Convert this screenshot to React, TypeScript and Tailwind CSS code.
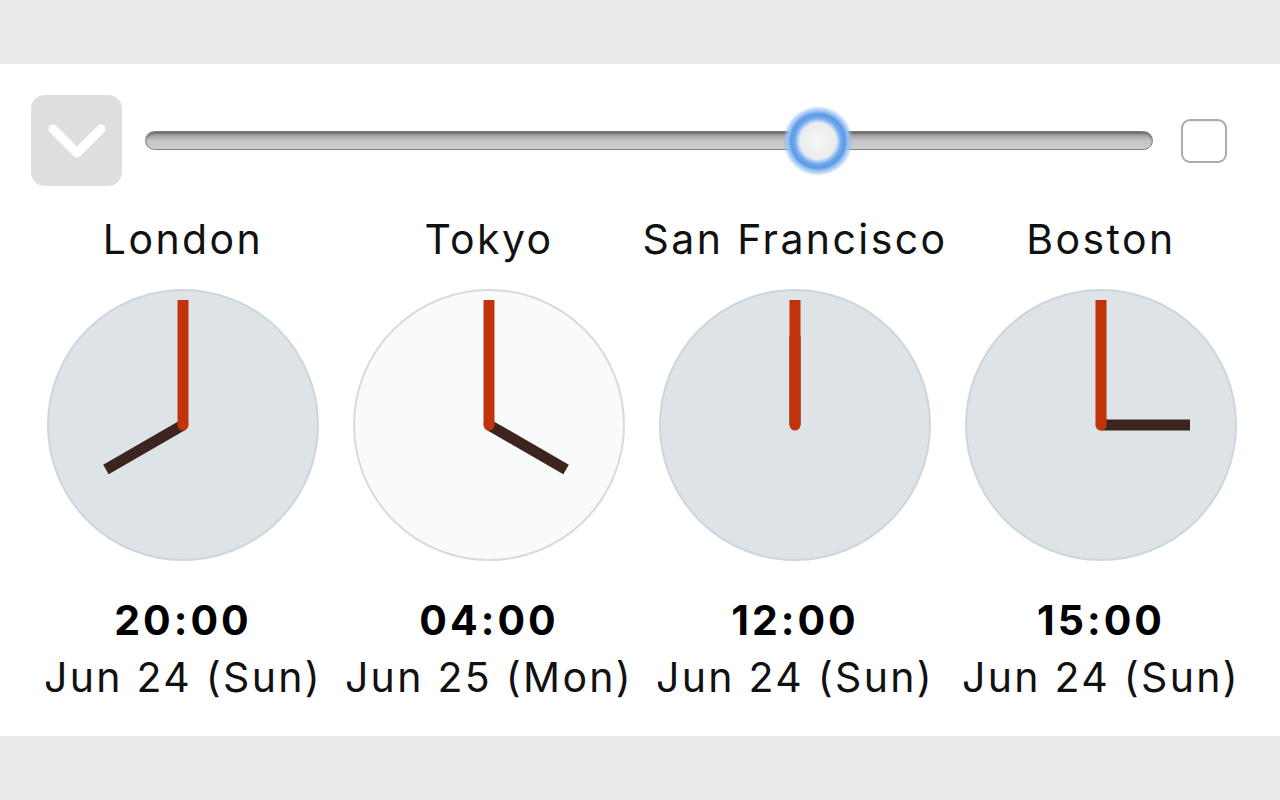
import React from "react";

type Clock = { city: string; h: number; m: number; time: string; date: string; night?: boolean };

const clocks: Clock[] = [
  { city: "London", h: 20, m: 0, time: "20:00", date: "Jun 24 (Sun)" },
  { city: "Tokyo", h: 4, m: 0, time: "04:00", date: "Jun 25 (Mon)", night: true },
  { city: "San Francisco", h: 12, m: 0, time: "12:00", date: "Jun 24 (Sun)" },
  { city: "Boston", h: 15, m: 0, time: "15:00", date: "Jun 24 (Sun)" },
];

function Face({ h, m, night }: { h: number; m: number; night?: boolean }) {
  const c = 136;
  const ha = (((h % 12) + m / 60) / 12) * Math.PI * 2;
  const ma = (m / 60) * Math.PI * 2;
  const hl = 89;
  const ml = 125;
  const hx = c + Math.sin(ha) * hl;
  const hy = c - Math.cos(ha) * hl;
  const mx = c + Math.sin(ma) * ml;
  const my = c - Math.cos(ma) * ml;
  return (
    <svg width="272" height="272" viewBox="0 0 272 272">
      <circle
        cx={c}
        cy={c}
        r={135}
        fill={night ? "#f9fafa" : "#dee3e7"}
        stroke={night ? "#dadada" : "#ccd6dc"}
        strokeWidth={2}
      />
      <line x1={c} y1={c} x2={hx} y2={hy} stroke="#3c241f" strokeWidth={11} strokeLinecap="butt" />
      <line x1={c} y1={c} x2={mx} y2={my} stroke="#c1340b" strokeWidth={11} strokeLinecap="butt" />
      <circle cx={c} cy={c} r={5.5} fill="#c1340b" />
    </svg>
  );
}

export default function App() {
  return (
    <div className="w-[1280px] h-[800px] bg-[#ebebeb] flex flex-col" style={{ fontFamily: "Inter, 'Liberation Sans', sans-serif" }}>
      <div className="h-[64px]" />
      <div className="h-[672px] bg-white flex flex-col">
        <div className="flex items-center pl-[31px] pr-[53px] pt-[31px]">
          <div className="w-[91px] h-[91px] rounded-[14px] bg-[#dedede] flex items-center justify-center">
            <svg width="60" height="40" viewBox="0 0 60 40">
              <polyline points="6,8 30,32 54,8" fill="none" stroke="#ffffff" strokeWidth="9" strokeLinecap="round" strokeLinejoin="round" />
            </svg>
          </div>
          <div className="ml-[23px] flex-1 relative h-[70px] flex items-center">
            <div className="w-full h-[19px] rounded-full border border-[#7e7e7e] bg-gradient-to-b from-[#8f8f8f] via-[#c4c4c4] to-[#cfcfcf] shadow-[inset_0_2px_2px_rgba(0,0,0,0.25)]" />
            <div className="absolute left-[638px] top-0 w-[70px] h-[70px] rounded-full bg-[radial-gradient(circle,#f7f7f7_0,#ececec_18px,#c2dbf8_19.5px,#74aaec_23px,#5a9ae6_27px,#9cc3f4_30px,rgba(150,192,246,0.55)_32.5px,transparent_35px)]" />
          </div>
          <div className="ml-[28px] w-[46px] h-[44px] rounded-[9px] border-2 border-[#acacac] bg-white shadow-[inset_0_1px_2px_rgba(0,0,0,0.08)]" />
        </div>
        <div className="grid grid-cols-4 pl-[30px] pr-[26px] mt-[30px]">
          {clocks.map((k) => (
            <div key={k.city} className="flex flex-col items-center">
              <div className="text-[41px] leading-[46px] text-[#111] tracking-[2.4px] whitespace-nowrap">{k.city}</div>
              <div className="mt-[27px]">
                <Face h={k.h} m={k.m} night={k.night} />
              </div>
              <div className="mt-[34px] text-[41px] leading-[50px] font-bold text-black tracking-[3px]">{k.time}</div>
              <div className="mt-[9px] text-[41px] leading-[46px] text-[#111] tracking-[2.3px] whitespace-nowrap">{k.date}</div>
            </div>
          ))}
        </div>
      </div>
    </div>
  );
}
